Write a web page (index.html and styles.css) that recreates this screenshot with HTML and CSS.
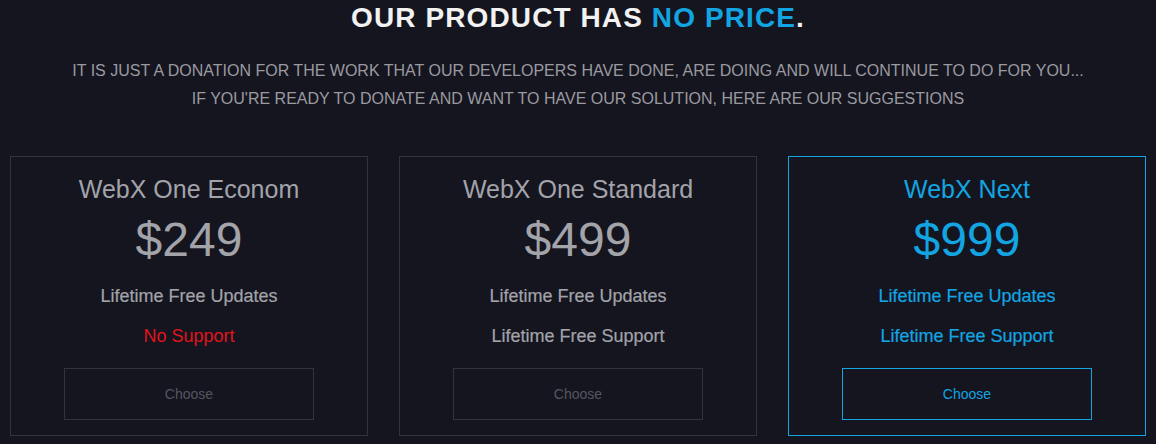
FILE: index.html
```html
<!DOCTYPE html>
<html lang="en">
<head>
<meta charset="utf-8">
<title>Pricing</title>
<link rel="stylesheet" href="styles.css">
</head>
<body>
<section class="pricing">
  <header class="pricing-head">
    <h1 class="pricing-title">OUR PRODUCT HAS <span class="accent">NO PRICE</span>.</h1>
    <p class="pricing-sub">IT IS JUST A DONATION FOR THE WORK THAT OUR DEVELOPERS HAVE DONE, ARE DOING AND WILL CONTINUE TO DO FOR YOU...<br>IF YOU'RE READY TO DONATE AND WANT TO HAVE OUR SOLUTION, HERE ARE OUR SUGGESTIONS</p>
  </header>
  <div class="plans">
    <div class="plan">
      <h2 class="plan-name">WebX One Econom</h2>
      <div class="plan-price">$249</div>
      <div class="plan-feature">Lifetime Free Updates</div>
      <div class="plan-feature no">No Support</div>
      <button class="plan-btn">Choose</button>
    </div>
    <div class="plan">
      <h2 class="plan-name">WebX One Standard</h2>
      <div class="plan-price">$499</div>
      <div class="plan-feature">Lifetime Free Updates</div>
      <div class="plan-feature">Lifetime Free Support</div>
      <button class="plan-btn">Choose</button>
    </div>
    <div class="plan active">
      <h2 class="plan-name">WebX Next</h2>
      <div class="plan-price">$999</div>
      <div class="plan-feature">Lifetime Free Updates</div>
      <div class="plan-feature">Lifetime Free Support</div>
      <button class="plan-btn">Choose</button>
    </div>
  </div>
</section>
</body>
</html>
```

FILE: styles.css
```css
* { box-sizing: border-box; }

html, body {
  margin: 0;
  padding: 0;
  background: #15151f;
  font-family: "Liberation Sans", Arial, sans-serif;
}

.pricing {
  padding: 0 10px;
}

.pricing-head {
  text-align: center;
}

.pricing-title {
  margin: 0;
  padding-top: 3px;
  font-size: 28px;
  line-height: 30px;
  font-weight: 700;
  letter-spacing: 1.1px;
  color: #f2f2f2;
}

.pricing-title .accent {
  color: #12a5e2;
}

.pricing-sub {
  margin: 24px 0 0;
  font-size: 16px;
  line-height: 28px;
  color: #9a9aa0;
}

.plans {
  display: grid;
  grid-template-columns: repeat(3, 1fr);
  gap: 31px;
  margin-top: 43px;
}

.plan {
  border: 1px solid #33333e;
  padding: 17px 20px 15px;
  display: flex;
  flex-direction: column;
  align-items: center;
  text-align: center;
  color: #a3a3aa;
}

.plan-name {
  margin: 0;
  font-size: 25px;
  line-height: 30px;
  font-weight: 400;
}

.plan-price {
  margin-top: 8px;
  font-size: 48px;
  line-height: 56px;
}

.plan-feature {
  font-size: 18px;
  line-height: 40px;
  -webkit-text-stroke: 0.2px currentColor;
}

.plan-price + .plan-feature {
  margin-top: 8px;
}

.plan-feature.no {
  color: #e0141b;
  -webkit-text-stroke: 0;
}

.plan-btn {
  margin-top: 12px;
  width: 250px;
  height: 52px;
  background: transparent;
  border: 1px solid #33333e;
  color: #55555f;
  font-family: inherit;
  font-size: 14px;
  cursor: pointer;
}

.plan.active {
  border-color: #12a5e2;
  color: #12a5e2;
}

.plan.active .plan-btn {
  border-color: #12a5e2;
  color: #12a5e2;
}
```
